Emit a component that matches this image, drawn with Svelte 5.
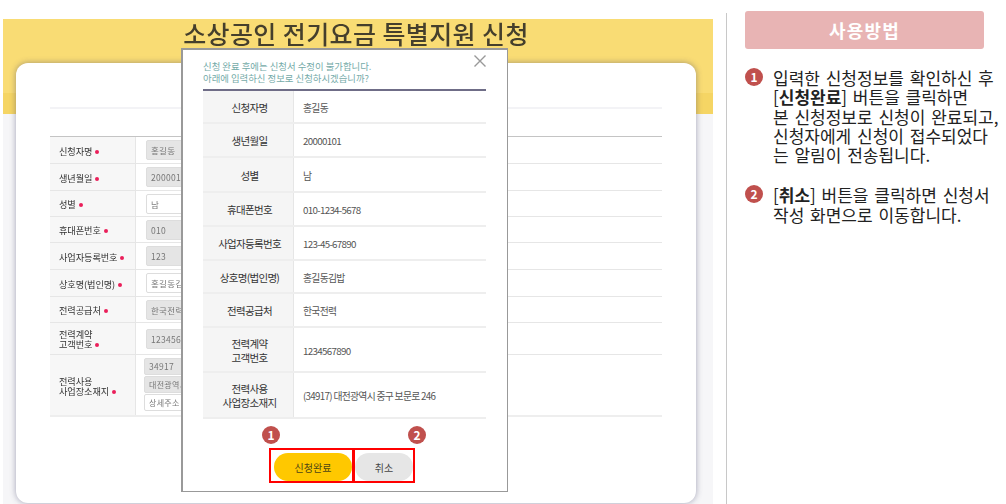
<script>
  const formRows = [
    { label: ['신청자명'], value: '홍길동', locked: true, h: 27 },
    { label: ['생년월일'], value: '20000101', locked: true, h: 27 },
    { label: ['성별'], value: '남', h: 26 },
    { label: ['휴대폰번호'], value: '010', locked: true, h: 26 },
    { label: ['사업자등록번호'], value: '123', locked: true, h: 27 },
    { label: ['상호명(법인명)'], value: '홍길동김밥', h: 27 },
    { label: ['전력공급처'], value: '한국전력', locked: true, h: 26 },
    { label: ['전력계약', '고객번호'], value: '1234567890', locked: true, h: 32 }
  ];

  const summary = [
    { label: ['신청자명'], value: '홍길동', h: 33 },
    { label: ['생년월일'], value: '20000101', h: 34 },
    { label: ['성별'], value: '남', h: 35 },
    { label: ['휴대폰번호'], value: '010-1234-5678', h: 34 },
    { label: ['사업자등록번호'], value: '123-45-67890', h: 34 },
    { label: ['상호명(법인명)'], value: '홍길동김밥', h: 33 },
    { label: ['전력공급처'], value: '한국전력', h: 34 },
    { label: ['전력계약', '고객번호'], value: '1234567890', h: 45 },
    { label: ['전력사용', '사업장소재지'], value: '(34917) 대전광역시 중구 보문로 246', h: 46 }
  ];
</script>

<div class="page">
  <section class="shot">
    <h1>소상공인 전기요금 특별지원 신청</h1>
    <div class="card">
      <div class="form">
        {#each formRows as row}
          <div class="form-row" style="height: {row.h}px">
            <div class="form-label">
              <span>
                {#each row.label as line, i}
                  {#if i > 0}<br />{/if}{line}
                {/each}
                <i class="req"></i>
              </span>
            </div>
            <div class="form-value">
              <div class="input" class:locked={row.locked}>{row.value}</div>
            </div>
          </div>
        {/each}
        <div class="form-row address">
          <div class="form-label">
            <span>전력사용<br />사업장소재지 <i class="req"></i></span>
          </div>
          <div class="form-value stack">
            <div class="input locked">34917</div>
            <div class="input locked small">대전광역시 중구 보문로 246</div>
            <div class="input small">상세주소 입력</div>
          </div>
        </div>
      </div>
    </div>

    <div class="modal">
      <svg class="close" width="14" height="14" viewBox="0 0 14 14">
        <path d="M1.5 1.5 12.5 12.5M12.5 1.5 1.5 12.5" stroke="#999" stroke-width="1.4" fill="none" />
      </svg>
      <p class="notice">신청 완료 후에는 신청서 수정이 불가합니다.<br />아래에 입력하신 정보로 신청하시겠습니까?</p>
      <div class="summary">
        {#each summary as row}
          <div class="summary-row" style="height: {row.h}px">
            <div class="summary-label">
              <span>
                {#each row.label as line, i}
                  {#if i > 0}<br />{/if}{line}
                {/each}
              </span>
            </div>
            <div class="summary-value">{row.value}</div>
          </div>
        {/each}
      </div>
      <div class="actions">
        <div class="mark">
          <b class="step">1</b>
          <div class="box box-ok"><button class="btn ok">신청완료</button></div>
        </div>
        <div class="mark">
          <b class="step second">2</b>
          <div class="box box-cancel"><button class="btn cancel">취소</button></div>
        </div>
      </div>
    </div>
  </section>

  <aside class="help">
    <div class="help-title">사용방법</div>
    <ol>
      <li>
        <b class="dot">1</b>
        <p>입력한 신청정보를 확인하신 후<br />[<strong>신청완료</strong>] 버튼을 클릭하면<br />본 신청정보로 신청이 완료되고,<br />신청자에게 신청이 접수되었다<br />는 알림이 전송됩니다.</p>
      </li>
      <li>
        <b class="dot">2</b>
        <p>[<strong>취소</strong>] 버튼을 클릭하면 신청서<br />작성 화면으로 이동합니다.</p>
      </li>
    </ol>
  </aside>
</div>

<style>
  :global(body) {
    margin: 0;
    background: #fff;
    overflow: hidden;
  }
  .page {
    display: flex;
    width: 1006px;
    height: 504px;
    overflow: hidden;
    font-family: 'Noto Sans CJK KR', 'Noto Sans', sans-serif;
    color: #222;
  }

  /* left: screenshot of the form */
  .shot {
    position: relative;
    flex: none;
    box-sizing: border-box;
    width: 710px;
    height: 485px;
    margin: 19px 0 0 3px;
    background: linear-gradient(#f9dc74 0 74px, #f5d564 74px 95px, #f6f6f8 95px);
    filter: blur(0.35px);
  }
  h1 {
    margin: 0;
    height: 44px;
    padding-right: 4px;
    font-size: 25px;
    line-height: 29px;
    font-weight: 500;
    letter-spacing: 0.4px;
    text-align: center;
    color: #453f2c;
  }
  .card {
    box-sizing: border-box;
    width: 680px;
    height: 440px;
    margin-left: 13px;
    padding-top: 44px;
    padding-left: 34px;
    padding-right: 34px;
    background: #fff;
    border-radius: 12px;
    box-shadow: 0 0 6px rgba(60, 60, 100, 0.45);
  }
  .form {
    padding-top: 0;
    border-top: 2px solid #f3f3f6;
  }
  .form::before {
    content: '';
    display: block;
    height: 27px;
    border-bottom: 1px solid #c4c4c4;
  }
  .form-row {
    display: flex;
    box-sizing: border-box;
    border-bottom: 1px solid #e6e6e6;
  }
  .form-row.address {
    height: 62px;
    border-bottom-width: 2px;
    border-color: #eee;
  }
  .form-label {
    display: flex;
    align-items: center;
    box-sizing: border-box;
    width: 86px;
    padding: 1px 0 0 9px;
    background: #f7f7f7;
    border-right: 1px solid #e6e6e6;
    font-size: 9.2px;
    letter-spacing: -0.1px;
    line-height: 10px;
    color: #333;
  }
  .req {
    display: inline-block;
    width: 4px;
    height: 4px;
    margin-left: 1px;
    vertical-align: 1px;
    border-radius: 50%;
    background: #ea1f5a;
  }
  .form-value {
    display: flex;
    align-items: center;
    padding-left: 10px;
  }
  .input {
    box-sizing: border-box;
    width: 100px;
    height: 20px;
    padding-left: 4px;
    border: 1px solid #ddd;
    border-radius: 2px;
    background: #fff;
    font-size: 8.5px;
    line-height: 18px;
    color: #777;
    white-space: nowrap;
    letter-spacing: 0.3px;
  }
  .input.locked {
    background: #e5e5e5;
  }
  .stack {
    flex-direction: column;
    align-items: flex-start;
    gap: 1px;
    padding-left: 8px;
    padding-top: 3px;
  }
  .stack .input {
    height: 17px;
    line-height: 15px;
  }
  .stack .small {
    font-size: 8px;
  }

  /* confirm dialog */
  .modal {
    position: absolute;
    left: 178px;
    top: 29px;
    box-sizing: border-box;
    width: 327px;
    height: 444px;
    padding: 0 21px 0 20px;
    background: #fff;
    border: 2px solid #999;
    border-right-width: 1px;
    border-bottom-width: 1px;
  }
  .close {
    position: absolute;
    left: 290px;
    top: 4px;
  }
  .notice {
    margin: 0;
    padding-top: 10px;
    height: 29px;
    font-size: 9.4px;
    line-height: 12px;
    color: #74aaa8;
  }
  .summary {
    border-top: 2px solid #6f6d87;
  }
  .summary-row {
    display: flex;
    box-sizing: border-box;
    border-bottom: 2px solid #eee;
  }
  .summary-label {
    display: flex;
    align-items: center;
    justify-content: center;
    box-sizing: border-box;
    width: 91px;
    padding: 2px 0 0 3px;
    background: #f5f5f5;
    border-right: 1px solid #e6e6e6;
    text-align: center;
    font-size: 10.5px;
    letter-spacing: -0.7px;
    line-height: 14px;
    color: #333;
  }
  .summary-value {
    align-self: center;
    padding: 2px 0 0 9px;
    font-size: 9.8px;
    letter-spacing: -0.7px;
    color: #555;
  }
  .actions {
    position: relative;
    display: flex;
    justify-content: flex-start;
    padding: 29px 0 0 66px;
  }
  .mark {
    position: relative;
  }
  .box {
    box-sizing: border-box;
    height: 35px;
    padding-top: 3px;
    border: 2px solid #f00;
  }
  .box-ok {
    width: 85px;
    padding-left: 3px;
  }
  .box-cancel {
    width: 62px;
    margin-left: -1px;
    padding-left: 0;
  }
  .btn {
    display: block;
    height: 28px;
    padding: 0;
    border: 0;
    border-radius: 14px;
    font-family: inherit;
    font-size: 10px;
    color: #444;
  }
  .ok {
    width: 78px;
    background: #ffc800;
    color: #4d4515;
  }
  .cancel {
    width: 58px;
    background: #e6e6e6;
  }
  .step {
    position: absolute;
    top: -22px;
    left: -7px;
    width: 18px;
    height: 18px;
    border-radius: 50%;
    background: #c0504d;
    color: #fff;
    font-size: 12px;
    line-height: 18px;
    text-align: center;
  }
  .step.second {
    left: 54px;
  }

  /* right: usage panel */
  .help {
    box-sizing: border-box;
    flex: none;
    width: 280px;
    height: 491px;
    margin: 13px 0 0 13px;
    padding-left: 18px;
    border-left: 1px solid #c8c8c8;
  }
  .help-title {
    box-sizing: border-box;
    width: 239px;
    height: 38px;
    margin-top: -2px;
    border-radius: 3px;
    background: #e8b4b4;
    color: #fff;
    font-size: 18px;
    font-weight: 700;
    line-height: 38px;
    text-align: center;
    letter-spacing: 1.2px;
  }
  ol {
    list-style: none;
    margin: 19px 0 0;
    padding: 0;
  }
  li {
    display: flex;
    gap: 10px;
    margin-bottom: 21px;
  }
  .dot {
    flex: none;
    width: 18px;
    height: 18px;
    margin-top: 0;
    border-radius: 50%;
    background: #c0504d;
    color: #fff;
    font-size: 12px;
    line-height: 18px;
    text-align: center;
  }
  li p {
    margin: 0;
    font-size: 17px;
    line-height: 19.3px;
    word-spacing: 2px;
    white-space: nowrap;
    color: #222;
  }
  li strong {
    font-weight: 700;
  }
</style>
